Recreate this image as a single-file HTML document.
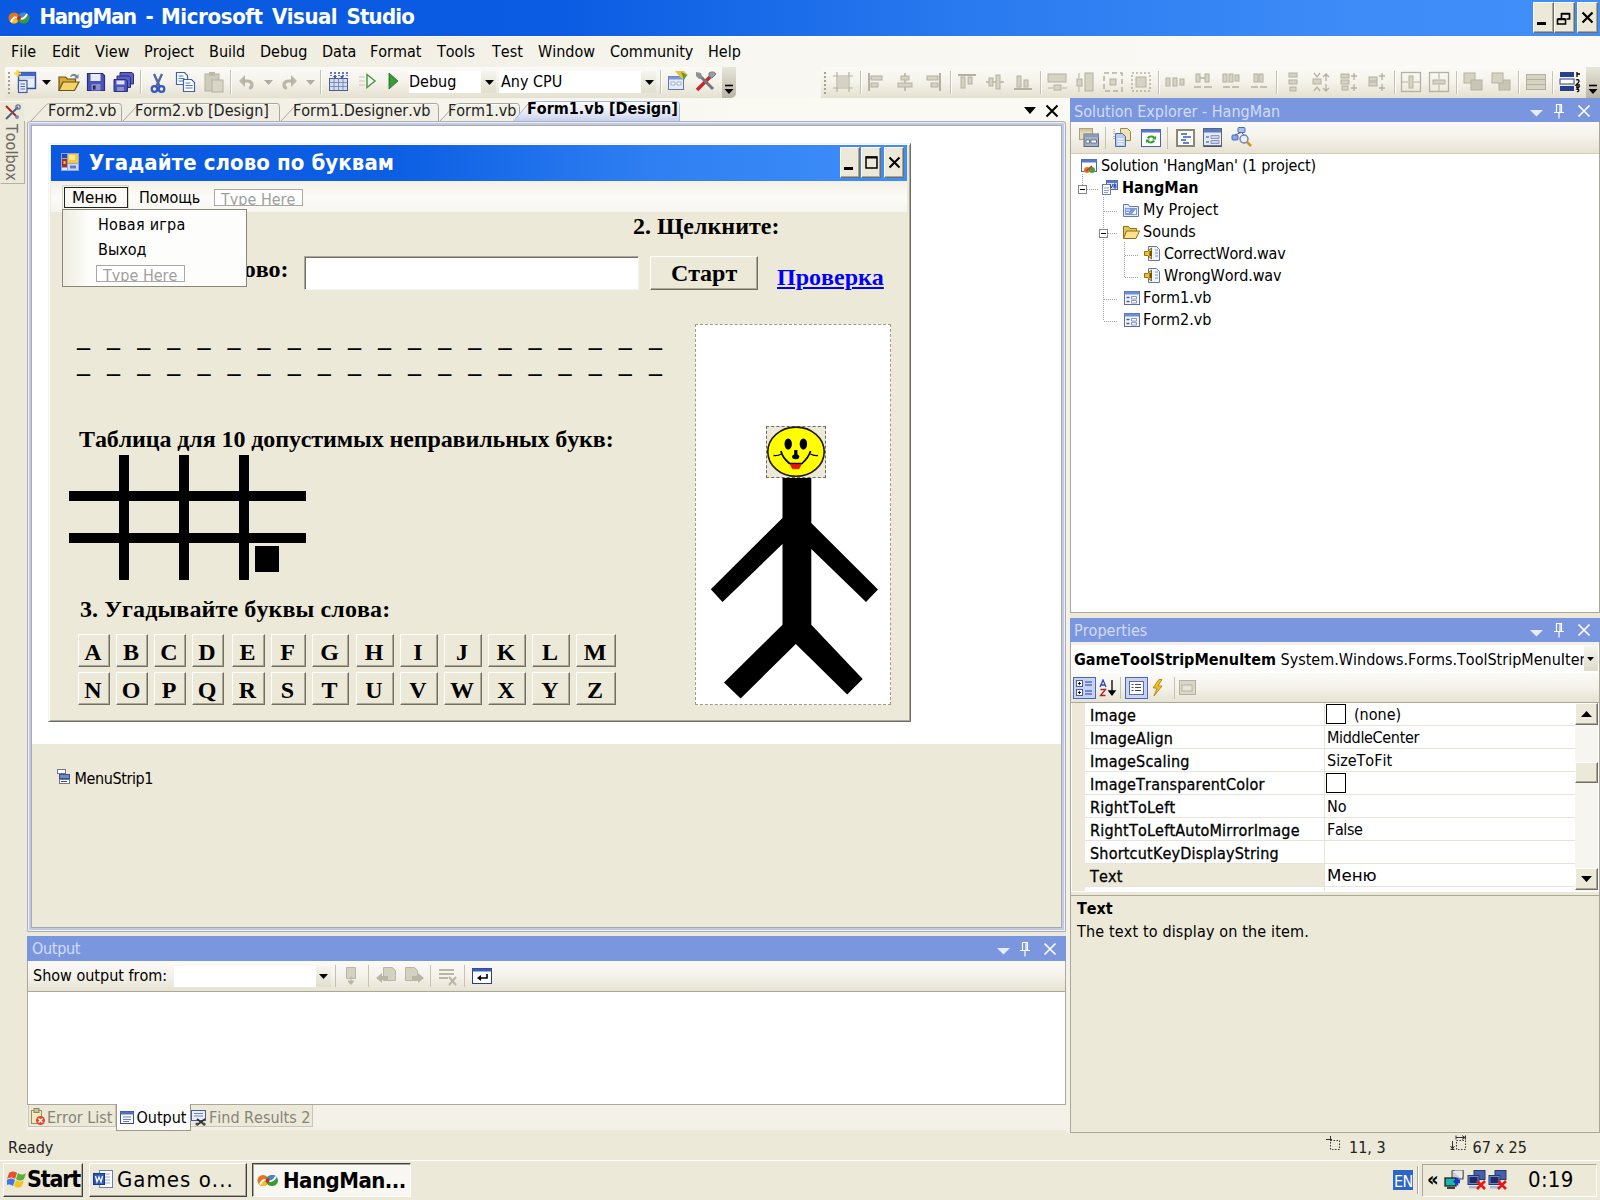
<!DOCTYPE html>
<html><head><meta charset="utf-8"><title>HangMan - Microsoft Visual Studio</title>
<style>
*{box-sizing:border-box;margin:0;padding:0}
html,body{width:1600px;height:1200px;overflow:hidden;background:#ECE9D8}
body{position:relative;font-family:"DejaVu Sans Condensed","Liberation Sans",sans-serif;font-size:16px;color:#000;font-kerning:none;font-feature-settings:'kern' 0,'liga' 0}
.a{position:absolute}
.t{position:absolute;white-space:nowrap;line-height:1}
.ser{font-family:"Liberation Serif",serif;font-weight:bold}
.b{font-weight:bold}
.btn3d{position:absolute;background:#ECE9D8;border:1px solid;border-color:#fff #716F64 #716F64 #fff;box-shadow:inset -1px -1px 0 #ACA899}
.phead{position:absolute;background:#7A96DF;color:#DDE4F6;font-size:16px}
.sep{position:absolute;width:1px;background:#C5C2B2;box-shadow:1px 0 0 #fff}
.tb{position:absolute;border-radius:0 0 6px 0;background:linear-gradient(180deg,#FBFAF7 0%,#F4F2EA 50%,#E4E1D0 100%)}
.lb{position:absolute;background:#ECE9D8;border:1px solid;border-color:#fff #716F64 #716F64 #fff;box-shadow:inset -1px -1px 0 #ACA899;font-family:"Liberation Serif",serif;font-weight:bold;font-size:24px;text-align:center;line-height:34px;padding-right:2px}
</style></head><body>
<div class="a" style="left:0px;top:0px;width:1600px;height:36px;background:linear-gradient(90deg,#0A59E0 0%,#0B5CE2 35%,#2B7BF0 62%,#3D8CF8 85%,#3F8EF9 100%)"></div>
<svg class="a" style="left:8px;top:10px" width="22" height="16" viewBox="0 0 22 16"><ellipse cx="6" cy="8" rx="5.500" ry="5.500" fill="#E8731C"/><ellipse cx="15.500" cy="8" rx="6" ry="5.500" fill="#3A9B35"/><ellipse cx="16" cy="5" rx="4" ry="2.500" fill="#4E7FD8"/><ellipse cx="6" cy="11" rx="3.500" ry="2.500" fill="#F4C22B"/><path d="M3 12C8 0,13 16,19 4" stroke="#fff" stroke-width="1.800" fill="none"/><circle cx="11" cy="8" r="2" fill="#C7252B"/></svg>
<span class="t ttl" style="left:39.5px;top:6.4px;font-size:22px;font-weight:bold;color:#fff;letter-spacing:-1.3px">HangMan</span>
<span class="t ttl" style="left:145.5px;top:6.4px;font-size:22px;font-weight:bold;color:#fff;letter-spacing:-0.2px">-</span>
<span class="t ttl" style="left:161px;top:6.4px;font-size:22px;font-weight:bold;color:#fff;letter-spacing:-0.37px">Microsoft</span>
<span class="t ttl" style="left:272px;top:6.4px;font-size:22px;font-weight:bold;color:#fff;letter-spacing:-0.5px">Visual</span>
<span class="t ttl" style="left:346.5px;top:6.4px;font-size:22px;font-weight:bold;color:#fff;letter-spacing:-0.8px">Studio</span>
<div class="btn3d" style="left:1533px;top:2px;width:21px;height:31px"></div>
<div class="btn3d" style="left:1554px;top:2px;width:21px;height:31px"></div>
<div class="btn3d" style="left:1577px;top:2px;width:21px;height:31px"></div>
<div class="a" style="left:1537px;top:22px;width:9px;height:3px;background:#000"></div>
<svg class="a" style="left:1556px;top:12px" width="15" height="13" viewBox="0 0 15 13"><path d="M5.500 6V1.800h8v5.200h-3 M5.500 1.500h8" stroke="#000" stroke-width="1.700" fill="none"/><path d="M1.5 7.5h8v4.5h-8z M1.5 6.8h8" stroke="#000" stroke-width="1.6" fill="none"/></svg>
<svg class="a" style="left:1581px;top:11px" width="13" height="13" viewBox="0 0 13 13"><path d="M1.5 1.5L11.5 11.5M11.5 1.5L1.5 11.5" stroke="#000" stroke-width="2.2"/></svg>
<div class="a" style="left:0px;top:36px;width:1600px;height:64px;background:linear-gradient(90deg,#ECE9D8 0,#F1EFE3 22%,#F8F7F1 48%,#FBFAF7 100%)"></div>
<div class="a" style="left:0px;top:36px;width:1600px;height:1px;background:#fff"></div>
<span class="t m" style="left:11px;top:44.0px;font-size:16px;">File</span>
<span class="t m" style="left:52px;top:44.0px;font-size:16px;">Edit</span>
<span class="t m" style="left:95px;top:44.0px;font-size:16px;">View</span>
<span class="t m" style="left:144px;top:44.0px;font-size:16px;">Project</span>
<span class="t m" style="left:209px;top:44.0px;font-size:16px;">Build</span>
<span class="t m" style="left:260px;top:44.0px;font-size:16px;">Debug</span>
<span class="t m" style="left:322px;top:44.0px;font-size:16px;">Data</span>
<span class="t m" style="left:370px;top:44.0px;font-size:16px;">Format</span>
<span class="t m" style="left:437px;top:44.0px;font-size:16px;">Tools</span>
<span class="t m" style="left:492px;top:44.0px;font-size:16px;">Test</span>
<span class="t m" style="left:538px;top:44.0px;font-size:16px;">Window</span>
<span class="t m" style="left:610px;top:44.0px;font-size:16px;">Community</span>
<span class="t m" style="left:708px;top:44.0px;font-size:16px;">Help</span>
<div class="tb" style="left:5px;top:67px;width:731px;height:31px"></div>
<div class="a" style="left:722px;top:67px;width:14px;height:31px;border-radius:0 0 5px 0;background:linear-gradient(180deg,#E8E6DA,#B8B5A5)"></div>
<svg class="a" style="left:724px;top:84px" width="10" height="11" viewBox="0 0 10 11"><path d="M1 1.5h8" stroke="#000" stroke-width="1.6"/><path d="M0.5 5h9L5 10z" fill="#000"/></svg>
<svg class="a" style="left:8px;top:71px" width="4" height="24" viewBox="0 0 4 24"><rect x="0" y="1" width="2" height="2" fill="#A5A292"/><rect x="0" y="5" width="2" height="2" fill="#A5A292"/><rect x="0" y="9" width="2" height="2" fill="#A5A292"/><rect x="0" y="13" width="2" height="2" fill="#A5A292"/><rect x="0" y="17" width="2" height="2" fill="#A5A292"/><rect x="0" y="21" width="2" height="2" fill="#A5A292"/></svg>
<svg class="a" style="left:14px;top:70px" width="24" height="24" viewBox="0 0 24 24"><rect x="4.500" y="2.500" width="17" height="16" fill="#CCDAF6" stroke="#3450A0" stroke-width="1.400"/><rect x="4.500" y="2.500" width="17" height="3.500" fill="#4468C4"/><path d="M12 9h8v8h-8z" fill="#E8EEFC"/><path d="M3.500 0v7M0 3.500h7" stroke="#F8D838" stroke-width="2.200"/><rect x="4.500" y="10.500" width="8.500" height="12" fill="#E4ECFA" stroke="#4C5C94" stroke-width="1.200"/><path d="M6.500 14h4.500M6.500 16.500h4.500M6.500 19h4.500" stroke="#4C70C8" stroke-width="1.100"/></svg>
<svg class="a" style="left:42px;top:80px" width="9" height="5" viewBox="0 0 9 5"><path d="M0 0h9L4.5 5z" fill="#000"/></svg>
<svg class="a" style="left:57px;top:71px" width="24" height="22" viewBox="0 0 24 22"><path d="M2 19.500V6h6.500l2 2h8v3" fill="#D8A838" stroke="#6C5410" stroke-width="1.200"/><path d="M2 19.500l4-8.500h16l-4.500 8.500z" fill="#F4D468" stroke="#6C5410" stroke-width="1.200"/><path d="M13 5c3-3.500 6-2.500 7-0.500l1.500-1.500V7.500h-4.500l1.500-1.500c-1-1.200-3-1.500-4.500 0z" fill="#7888A4"/></svg>
<svg class="a" style="left:86px;top:72px" width="20" height="20" viewBox="0 0 20 20"><path d="M1.500 1.500h15l2 2v15h-17z" fill="#4B53B8" stroke="#2B2F7A" stroke-width="1.2"/><rect x="4.500" y="2" width="10" height="7" fill="#E8EAF6"/><rect x="5.500" y="12" width="9" height="6.500" fill="#8A8FD0"/><rect x="7" y="13.500" width="2.500" height="4" fill="#22255E"/></svg>
<svg class="a" style="left:113px;top:71px" width="22" height="22" viewBox="0 0 22 22"><path d="M7 1.500h12l1.500 1.500v10h-13.500z" fill="#5A61C0" stroke="#2B2F7A"/><path d="M4 5h12l1.500 1.500v10h-13.500z" fill="#5A61C0" stroke="#2B2F7A"/><path d="M1 8.500h12l1.500 1.500v10.500h-13.500z" fill="#4B53B8" stroke="#2B2F7A"/><rect x="3.500" y="9.500" width="8" height="4" fill="#E0E3F4"/><rect x="4" y="16" width="7" height="4" fill="#8A8FD0"/></svg>
<div class="sep" style="left:140px;top:70px;height:24px"></div>
<svg class="a" style="left:148px;top:70px" width="20" height="24" viewBox="0 0 20 24"><path d="M6 4l5.500 12M14 4L8.500 16" stroke="#5468A0" stroke-width="2.400"/><circle cx="6.500" cy="19" r="2.800" fill="none" stroke="#3458C0" stroke-width="2.200"/><circle cx="13.500" cy="19" r="2.800" fill="none" stroke="#3458C0" stroke-width="2.200"/></svg>
<svg class="a" style="left:175px;top:71px" width="22" height="22" viewBox="0 0 22 22"><path d="M1.500 1.500h8l3 3v9h-11z" fill="#fff" stroke="#4060B0" stroke-width="1.200"/><path d="M3.500 5h5M3.500 7.500h6M3.500 10h6" stroke="#4F77CF"/><path d="M8.500 8.500h8l3 3v9h-11z" fill="#fff" stroke="#4060B0" stroke-width="1.200"/><path d="M10.500 12h5M10.500 14.500h7M10.500 17h7" stroke="#4F77CF"/></svg>
<svg class="a" style="left:203px;top:71px" width="22" height="22" viewBox="0 0 22 22"><rect x="2" y="3" width="14" height="17" fill="#CFCCBC" stroke="#B4B1A0"/><rect x="6" y="1" width="6" height="4" fill="#BDBAA9"/><rect x="9" y="9" width="11" height="12" fill="#D9D6C7" stroke="#B4B1A0"/></svg>
<div class="sep" style="left:230px;top:70px;height:24px"></div>
<svg class="a" style="left:238px;top:72px" width="18" height="18" viewBox="0 0 18 18"><path d="M3 9h6c4 0 5 2 5 4s-1 3-3 3" stroke="#B9B6A6" stroke-width="3" fill="none"/><path d="M1 9l6-6v12z" fill="#B9B6A6"/></svg>
<svg class="a" style="left:264px;top:80px" width="9" height="5" viewBox="0 0 9 5"><path d="M0 0h9L4.5 5z" fill="#B0AD9D"/></svg>
<svg class="a" style="left:280px;top:72px" width="18" height="18" viewBox="0 0 18 18"><path d="M15 9H9C5 9 4 11 4 13s1 3 3 3" stroke="#B9B6A6" stroke-width="3" fill="none"/><path d="M17 9l-6-6v12z" fill="#B9B6A6"/></svg>
<svg class="a" style="left:306px;top:80px" width="9" height="5" viewBox="0 0 9 5"><path d="M0 0h9L4.5 5z" fill="#B0AD9D"/></svg>
<div class="sep" style="left:320px;top:70px;height:24px"></div>
<svg class="a" style="left:328px;top:71px" width="22" height="22" viewBox="0 0 22 22"><rect x="1.500" y="7.500" width="18" height="12" fill="#D4DCF0" stroke="#4C5A8C"/><path d="M1.500 11.500h18M1.500 15.500h18M6 7.500v12M10.500 7.500v12M15 7.500v12" stroke="#6C7CB0" stroke-width="0.800"/><path d="M3 1v4M7 1v4M11 1v4M15 1v4M19 1v4" stroke="#3458B8" stroke-width="1.600" stroke-dasharray="2 1"/><path d="M5 5l2 3 2-3M12 5l2 3 2-3" fill="#3458B8"/></svg>
<svg class="a" style="left:358px;top:72px" width="20" height="18" viewBox="0 0 20 18"><path d="M1 5h6M1 9h6M1 13h6" stroke="#C9C6B4" stroke-width="1.200"/><path d="M9 2.500l8 6.500-8 6.500z" fill="#F4FAF0" stroke="#4B9A43" stroke-width="1.500"/></svg>
<svg class="a" style="left:388px;top:72px" width="12" height="18" viewBox="0 0 12 18"><path d="M1 1l9 8-9 8z" fill="#3A9A35" stroke="#1F6B1E" stroke-width="0.800"/></svg>
<div class="a" style="left:409px;top:71px;width:72px;height:22px;background:#fff"></div>
<div class="a" style="left:481px;top:71px;width:15px;height:22px;background:linear-gradient(180deg,#F6F5EE,#E2DFCE)"></div>
<span class="t" style="left:409px;top:73.5px;font-size:16px;">Debug</span>
<svg class="a" style="left:485px;top:80px" width="9" height="5" viewBox="0 0 9 5"><path d="M0 0h9L4.5 5z" fill="#000"/></svg>
<div class="a" style="left:499px;top:71px;width:142px;height:22px;background:#fff"></div>
<div class="a" style="left:641px;top:71px;width:15px;height:22px;background:linear-gradient(180deg,#F6F5EE,#E2DFCE)"></div>
<span class="t" style="left:501px;top:73.5px;font-size:16px;">Any CPU</span>
<svg class="a" style="left:645px;top:80px" width="9" height="5" viewBox="0 0 9 5"><path d="M0 0h9L4.5 5z" fill="#000"/></svg>
<div class="sep" style="left:660px;top:70px;height:24px"></div>
<svg class="a" style="left:667px;top:70px" width="22" height="22" viewBox="0 0 22 22"><rect x="1.500" y="6.500" width="15" height="13" fill="#E6ECF8" stroke="#5C74B8"/><rect x="1.500" y="6.500" width="15" height="3" fill="#7C98DC"/><path d="M4 12h4v3h-4zM10 12h4v3h-4z" fill="#fff" stroke="#8CA0D0" stroke-width="0.800"/><path d="M8 1h9l4 4-5 4-3-2z" fill="#E8C040"/><path d="M14 2l6 3-3 5" fill="#5C9A48"/></svg>
<svg class="a" style="left:694px;top:70px" width="24" height="24" viewBox="0 0 24 24"><path d="M3 20L16 7" stroke="#C8262C" stroke-width="3.500"/><path d="M5 5l14 14" stroke="#70747C" stroke-width="3"/><path d="M2 2l5 1 1 5-3 1-3-3z" fill="#8C9098"/><path d="M15 3c3-2 6-1 7 1l-4 4-3-1z" fill="#9A9EA8" stroke="#60646C" stroke-width="0.800"/></svg>
<div class="tb" style="left:821px;top:67px;width:779px;height:31px;border-radius:0"></div>
<div class="a" style="left:1586px;top:67px;width:14px;height:31px;background:linear-gradient(180deg,#E8E6DA,#B8B5A5)"></div>
<svg class="a" style="left:1588px;top:84px" width="10" height="11" viewBox="0 0 10 11"><path d="M1 1.500h8" stroke="#000" stroke-width="1.600"/><path d="M0.500 5h9L5 10z" fill="#000"/></svg>
<svg class="a" style="left:824px;top:71px" width="4" height="24" viewBox="0 0 4 24"><rect x="0" y="1" width="2" height="2" fill="#A5A292"/><rect x="0" y="5" width="2" height="2" fill="#A5A292"/><rect x="0" y="9" width="2" height="2" fill="#A5A292"/><rect x="0" y="13" width="2" height="2" fill="#A5A292"/><rect x="0" y="17" width="2" height="2" fill="#A5A292"/><rect x="0" y="21" width="2" height="2" fill="#A5A292"/></svg>
<svg class="a" style="left:832px;top:71px" width="22" height="22" viewBox="0 0 22 22"><path d="M5 1v20M17 1v20M1 5h20M1 17h20" stroke="#B4B1A0" stroke-width="1.200"/><rect x="6" y="6" width="10" height="10" fill="#D6D3C3"/></svg>
<svg class="a" style="left:865px;top:71px" width="22" height="22" viewBox="0 0 22 22"><path d="M4 2v18" stroke="#B4B1A0" stroke-width="2"/><rect x="6" y="5" width="11" height="4" fill="#D6D3C3" stroke="#B4B1A0"/><rect x="6" y="12" width="7" height="4" fill="#D6D3C3" stroke="#B4B1A0"/></svg>
<svg class="a" style="left:894px;top:71px" width="22" height="22" viewBox="0 0 22 22"><path d="M11 2v18" stroke="#B4B1A0" stroke-width="1.500"/><rect x="7" y="5" width="8" height="4" fill="#D6D3C3" stroke="#B4B1A0"/><rect x="4" y="12" width="14" height="4" fill="#D6D3C3" stroke="#B4B1A0"/></svg>
<svg class="a" style="left:922px;top:71px" width="22" height="22" viewBox="0 0 22 22"><path d="M18 2v18" stroke="#B4B1A0" stroke-width="2"/><rect x="5" y="5" width="11" height="4" fill="#D6D3C3" stroke="#B4B1A0"/><rect x="9" y="12" width="7" height="4" fill="#D6D3C3" stroke="#B4B1A0"/></svg>
<svg class="a" style="left:956px;top:71px" width="22" height="22" viewBox="0 0 22 22"><path d="M2 4h18" stroke="#B4B1A0" stroke-width="2"/><rect x="5" y="6" width="4" height="11" fill="#D6D3C3" stroke="#B4B1A0"/><rect x="12" y="6" width="4" height="7" fill="#D6D3C3" stroke="#B4B1A0"/></svg>
<svg class="a" style="left:984px;top:71px" width="22" height="22" viewBox="0 0 22 22"><path d="M2 11h18" stroke="#B4B1A0" stroke-width="1.500"/><rect x="5" y="7" width="4" height="8" fill="#D6D3C3" stroke="#B4B1A0"/><rect x="12" y="4" width="4" height="14" fill="#D6D3C3" stroke="#B4B1A0"/></svg>
<svg class="a" style="left:1012px;top:71px" width="22" height="22" viewBox="0 0 22 22"><path d="M2 18h18" stroke="#B4B1A0" stroke-width="2"/><rect x="5" y="5" width="4" height="11" fill="#D6D3C3" stroke="#B4B1A0"/><rect x="12" y="9" width="4" height="7" fill="#D6D3C3" stroke="#B4B1A0"/></svg>
<svg class="a" style="left:1046px;top:71px" width="22" height="22" viewBox="0 0 22 22"><rect x="2" y="3" width="18" height="8" fill="#D6D3C3" stroke="#B4B1A0"/><rect x="8" y="14" width="7" height="5" fill="#D6D3C3" stroke="#B4B1A0"/><path d="M2 17h5M16 17h5" stroke="#B4B1A0"/></svg>
<svg class="a" style="left:1074px;top:71px" width="22" height="22" viewBox="0 0 22 22"><rect x="11" y="2" width="8" height="18" fill="#D6D3C3" stroke="#B4B1A0"/><rect x="3" y="8" width="5" height="7" fill="#D6D3C3" stroke="#B4B1A0"/><path d="M5 2v5M5 16v5" stroke="#B4B1A0"/></svg>
<svg class="a" style="left:1102px;top:71px" width="22" height="22" viewBox="0 0 22 22"><rect x="2" y="2" width="18" height="18" fill="none" stroke="#B4B1A0" stroke-width="1.500" stroke-dasharray="5 3"/><rect x="8" y="8" width="6" height="6" fill="#D6D3C3" stroke="#B4B1A0"/></svg>
<svg class="a" style="left:1130px;top:71px" width="22" height="22" viewBox="0 0 22 22"><rect x="2" y="2" width="18" height="18" fill="none" stroke="#B4B1A0" stroke-width="1.500" stroke-dasharray="2 2"/><rect x="6" y="6" width="10" height="10" fill="#D6D3C3" stroke="#B4B1A0"/></svg>
<svg class="a" style="left:1164px;top:71px" width="22" height="22" viewBox="0 0 22 22"><rect x="2" y="7" width="4" height="8" fill="#D6D3C3" stroke="#B4B1A0"/><rect x="9" y="7" width="4" height="8" fill="#D6D3C3" stroke="#B4B1A0"/><rect x="16" y="8" width="4" height="6" fill="#D6D3C3" stroke="#B4B1A0"/></svg>
<svg class="a" style="left:1192px;top:71px" width="22" height="22" viewBox="0 0 22 22"><rect x="4" y="3" width="4" height="8" fill="#D6D3C3" stroke="#B4B1A0"/><rect x="13" y="3" width="4" height="8" fill="#D6D3C3" stroke="#B4B1A0"/><path d="M2 16h7M12 16h8M8 7h5" stroke="#B4B1A0" stroke-width="1.300"/></svg>
<svg class="a" style="left:1220px;top:71px" width="22" height="22" viewBox="0 0 22 22"><rect x="3" y="3" width="4" height="8" fill="#D6D3C3" stroke="#B4B1A0"/><rect x="9" y="3" width="4" height="8" fill="#D6D3C3" stroke="#B4B1A0"/><rect x="15" y="4" width="4" height="6" fill="#D6D3C3" stroke="#B4B1A0"/><path d="M3 16h7M12 16h7" stroke="#B4B1A0" stroke-width="1.300"/></svg>
<svg class="a" style="left:1248px;top:71px" width="22" height="22" viewBox="0 0 22 22"><rect x="6" y="3" width="4" height="8" fill="#D6D3C3" stroke="#B4B1A0"/><rect x="11" y="3" width="4" height="8" fill="#D6D3C3" stroke="#B4B1A0"/><path d="M3 16h7M12 16h7" stroke="#B4B1A0" stroke-width="1.300"/></svg>
<svg class="a" style="left:1282px;top:71px" width="22" height="22" viewBox="0 0 22 22"><rect x="7" y="2" width="8" height="4" fill="#D6D3C3" stroke="#B4B1A0"/><rect x="7" y="9" width="8" height="4" fill="#D6D3C3" stroke="#B4B1A0"/><rect x="8" y="16" width="6" height="4" fill="#D6D3C3" stroke="#B4B1A0"/></svg>
<svg class="a" style="left:1310px;top:71px" width="22" height="22" viewBox="0 0 22 22"><rect x="3" y="8" width="8" height="5" fill="#D6D3C3" stroke="#B4B1A0"/><path d="M4 2l3 4 3-4M4 20l3-4 3 4M16 3v7M16 13v7M13 6l3-3 3 3M13 17l3 3 3-3" stroke="#B4B1A0" stroke-width="1.300" fill="none"/></svg>
<svg class="a" style="left:1338px;top:71px" width="22" height="22" viewBox="0 0 22 22"><rect x="3" y="3" width="8" height="4" fill="#D6D3C3" stroke="#B4B1A0"/><rect x="3" y="9" width="8" height="4" fill="#D6D3C3" stroke="#B4B1A0"/><rect x="4" y="15" width="6" height="4" fill="#D6D3C3" stroke="#B4B1A0"/><path d="M16 2v7M16 13v7M13 5h6M13 17h6" stroke="#B4B1A0" stroke-width="1.300"/></svg>
<svg class="a" style="left:1366px;top:71px" width="22" height="22" viewBox="0 0 22 22"><rect x="3" y="6" width="8" height="4" fill="#D6D3C3" stroke="#B4B1A0"/><rect x="3" y="11" width="8" height="4" fill="#D6D3C3" stroke="#B4B1A0"/><path d="M16 2v7M16 13v7M13 5h6M13 17h6" stroke="#B4B1A0" stroke-width="1.300"/></svg>
<svg class="a" style="left:1400px;top:71px" width="22" height="22" viewBox="0 0 22 22"><rect x="1.500" y="1.500" width="19" height="19" fill="none" stroke="#B4B1A0" stroke-width="1.300"/><rect x="9" y="5" width="4" height="12" fill="#D6D3C3" stroke="#B4B1A0"/><path d="M2 11h6M14 11h6" stroke="#B4B1A0"/></svg>
<svg class="a" style="left:1428px;top:71px" width="22" height="22" viewBox="0 0 22 22"><rect x="1.500" y="1.500" width="19" height="19" fill="none" stroke="#B4B1A0" stroke-width="1.300"/><rect x="5" y="9" width="12" height="4" fill="#D6D3C3" stroke="#B4B1A0"/><path d="M11 2v6M11 14v6" stroke="#B4B1A0"/></svg>
<svg class="a" style="left:1462px;top:71px" width="22" height="22" viewBox="0 0 22 22"><rect x="2" y="2" width="11" height="10" fill="#D6D3C3" stroke="#B4B1A0"/><rect x="9" y="9" width="11" height="10" fill="#C9C6B5" stroke="#B4B1A0"/></svg>
<svg class="a" style="left:1490px;top:71px" width="22" height="22" viewBox="0 0 22 22"><rect x="9" y="9" width="11" height="10" fill="#C9C6B5" stroke="#B4B1A0"/><rect x="2" y="2" width="11" height="10" fill="#D6D3C3" stroke="#B4B1A0"/></svg>
<svg class="a" style="left:1525px;top:71px" width="22" height="22" viewBox="0 0 22 22"><rect x="1.500" y="3.500" width="19" height="15" fill="#D6D3C3" stroke="#B4B1A0"/><path d="M2 8.500h19M2 13.500h19" stroke="#B4B1A0"/></svg>
<svg class="a" style="left:1559px;top:70px" width="24" height="24" viewBox="0 0 24 24"><rect x="1" y="2" width="14" height="5" fill="#28408C"/><rect x="1" y="9" width="14" height="5" fill="#fff" stroke="#28408C"/><rect x="1" y="16" width="14" height="5" fill="#28408C"/><path d="M18 2v5M18 4h3M17 10c3-1 4 1 2 3l-2 2h4M17 17h3l-2 2c2 0 3 2 0 3" stroke="#000" stroke-width="1.300" fill="none"/></svg>
<div class="sep" style="left:860px;top:71px;height:23px"></div>
<div class="sep" style="left:950px;top:71px;height:23px"></div>
<div class="sep" style="left:1040px;top:71px;height:23px"></div>
<div class="sep" style="left:1158px;top:71px;height:23px"></div>
<div class="sep" style="left:1276px;top:71px;height:23px"></div>
<div class="sep" style="left:1394px;top:71px;height:23px"></div>
<div class="sep" style="left:1456px;top:71px;height:23px"></div>
<div class="sep" style="left:1518px;top:71px;height:23px"></div>
<div class="sep" style="left:1552px;top:71px;height:23px"></div>
<div class="a" style="left:0px;top:101px;width:25px;height:83px;background:#ECE9D8;border:1px solid;border-color:#F8F7F2 #B5B2A2 #B5B2A2 #ECE9D8"></div>
<svg class="a" style="left:4px;top:104px" width="17" height="17" viewBox="0 0 17 17"><path d="M2 2l12 12" stroke="#B02020" stroke-width="2"/><path d="M2 15L14 3" stroke="#50607C" stroke-width="2"/><circle cx="14" cy="3" r="2.200" fill="none" stroke="#6078A8" stroke-width="1.300"/><circle cx="13" cy="13" r="2" fill="#7C90B8"/></svg>
<span class="t" style="left:3px;top:124px;font-size:16px;color:#6A6A64;writing-mode:vertical-rl;">Toolbox</span>
<div class="a" style="left:24px;top:99px;width:1046px;height:22px;background:linear-gradient(90deg,#EFEDE0 0,#F4F2E8 30%,#FAF9F2 70%,#FAF9F2 100%)"></div>
<svg class="a" style="left:30px;top:102px" width="93" height="20" viewBox="0 0 93 20"><path d="M0.500 19.500L15 4Q17 1.500 21 1.500H89Q91.5 1.500 91.5 4.500V19.500" fill="#EEECDF" fill-opacity="0.6" stroke="#ACA899"/><path d="M16 4.500Q18 2.500 21 2.500H89" fill="none" stroke="#fff"/></svg>
<span class="t" style="left:48px;top:102.5px;font-size:16px;color:#222">Form2.vb</span>
<svg class="a" style="left:122px;top:102px" width="159" height="20" viewBox="0 0 159 20"><path d="M0.500 19.500L15 4Q17 1.500 21 1.500H155Q157.5 1.500 157.5 4.500V19.500" fill="#EEECDF" fill-opacity="0.6" stroke="#ACA899"/><path d="M16 4.500Q18 2.500 21 2.500H155" fill="none" stroke="#fff"/></svg>
<span class="t" style="left:135px;top:102.5px;font-size:16px;color:#222">Form2.vb [Design]</span>
<svg class="a" style="left:280px;top:102px" width="160" height="20" viewBox="0 0 160 20"><path d="M0.500 19.500L15 4Q17 1.500 21 1.500H156Q158.5 1.500 158.5 4.500V19.500" fill="#EEECDF" fill-opacity="0.6" stroke="#ACA899"/><path d="M16 4.500Q18 2.500 21 2.500H156" fill="none" stroke="#fff"/></svg>
<span class="t" style="left:293px;top:102.5px;font-size:16px;color:#222">Form1.Designer.vb</span>
<svg class="a" style="left:439px;top:102px" width="82" height="20" viewBox="0 0 82 20"><path d="M0.500 19.500L15 4Q17 1.500 21 1.500H78Q80.5 1.500 80.5 4.500V19.500" fill="#EEECDF" fill-opacity="0.6" stroke="#ACA899"/><path d="M16 4.500Q18 2.500 21 2.500H78" fill="none" stroke="#fff"/></svg>
<span class="t" style="left:448px;top:102.5px;font-size:16px;color:#222">Form1.vb</span>
<svg class="a" style="left:510px;top:100px" width="172" height="26" viewBox="0 0 172 26"><defs><linearGradient id="atg" x1="0" y1="0" x2="0" y2="1"><stop offset="0" stop-color="#FDFDFE"/><stop offset="0.500" stop-color="#E4E9F7"/><stop offset="1" stop-color="#B7C4EA"/></linearGradient></defs><path d="M0.500 25L17 5Q19.500 1.500 24 1.500H166Q169.500 1.500 169.500 5V25z" fill="url(#atg)" stroke="#A8B4D8"/></svg>
<span class="t atab" style="left:527px;top:100.5px;font-size:16px;font-weight:bold;">Form1.vb [Design]</span>
<svg class="a" style="left:1024px;top:107px" width="12" height="7" viewBox="0 0 12 7"><path d="M0 0h12L6 7z" fill="#000"/></svg>
<svg class="a" style="left:1045px;top:104px" width="14" height="14" viewBox="0 0 14 14"><path d="M1.500 1.500L12.500 12.500M12.500 1.500L1.500 12.500" stroke="#000" stroke-width="2"/></svg>
<div class="a" style="left:27px;top:121px;width:1039px;height:811px;background:#fff;border-radius:3px 3px 0 0;border:1px solid #A9ADBC;box-shadow:inset 0 0 0 1px #EEF0F8, inset 0 0 0 3px #C3C9DE, inset 0 0 0 4px #A4A9B6"></div>
<div class="a" style="left:32px;top:744px;width:1029px;height:183px;background:#ECE9D8"></div>
<svg class="a" style="left:57px;top:769px" width="13" height="15" viewBox="0 0 13 15"><rect x="0.500" y="0.500" width="8" height="4" fill="#fff" stroke="#6C7890"/><rect x="2.500" y="5.500" width="10" height="4" fill="#7088D0" stroke="#40508C"/><rect x="2.500" y="10.500" width="10" height="4" fill="#fff" stroke="#6C7890"/><path d="M4 12.500h6" stroke="#40508C"/></svg>
<span class="t ms1" style="left:74.5px;top:770.5px;font-size:16px;letter-spacing:-0.4px">MenuStrip1</span>
<div class="a" style="left:48px;top:143px;width:863px;height:579px;background:#ECE9D8;border:1px solid;border-color:#F4F3EC #6E6C62 #6E6C62 #F4F3EC;box-shadow:inset 1px 1px 0 #fff, inset -1px -1px 0 #ACA899"></div>
<div class="a" style="left:51px;top:145px;width:856px;height:36px;background:linear-gradient(90deg,#0A59E0 0%,#0C5EE3 40%,#2F7FF2 70%,#3F8EF9 100%)"></div>
<svg class="a" style="left:61px;top:153px" width="18" height="18" viewBox="0 0 18 18"><rect x="0" y="0" width="18" height="18" fill="#8CA4E4"/><rect x="1" y="1" width="5" height="4" fill="#2848B0"/><rect x="7" y="1" width="10" height="9" fill="#F8C838"/><rect x="8" y="2" width="6" height="5" fill="#FCE888"/><rect x="1" y="6" width="5" height="8" fill="#B82818"/><rect x="2.500" y="8" width="2" height="3" fill="#F0D040"/><rect x="7" y="11" width="10" height="6" fill="#D0DCF4"/><rect x="9" y="12.500" width="6" height="3" fill="#5878D0"/><rect x="1" y="15" width="5" height="2" fill="#E8ECF8"/></svg>
<span class="t ftl" style="left:89px;top:152.4px;font-size:22px;font-weight:bold;color:#fff;letter-spacing:0.08px">Угадайте слово по буквам</span>
<div class="btn3d" style="left:840px;top:147px;width:20px;height:31px"></div>
<div class="btn3d" style="left:861px;top:147px;width:20px;height:31px"></div>
<div class="btn3d" style="left:884px;top:147px;width:20px;height:31px"></div>
<div class="a" style="left:844px;top:167px;width:9px;height:3px;background:#000"></div>
<svg class="a" style="left:865px;top:156px" width="13" height="13" viewBox="0 0 13 13"><rect x="1" y="1" width="11" height="11" fill="none" stroke="#000" stroke-width="1.500"/><path d="M1 1.500h11" stroke="#000" stroke-width="2"/></svg>
<svg class="a" style="left:888px;top:156px" width="13" height="13" viewBox="0 0 13 13"><path d="M1.500 1.500L11.500 11.500M11.500 1.500L1.500 11.500" stroke="#000" stroke-width="2"/></svg>
<div class="a" style="left:51px;top:181px;width:856px;height:31px;background:linear-gradient(180deg,#F3F1E6 0%,#FCFBF8 50%,#F6F5EE 100%)"></div>
<span class="t ser l2" style="left:633px;top:214.4px;font-size:24px;">2. Щелкните:</span>
<span class="t ser l1" style="left:101.5px;top:256.9px;font-size:24px;">1. Введите слово:</span>
<div class="a" style="left:304px;top:256px;width:335px;height:34px;background:#fff;border:1px solid;border-color:#ACA899 #F4F3EC #F4F3EC #ACA899;box-shadow:inset 1px 1px 0 #716F64"></div>
<div class="btn3d" style="left:650px;top:256px;width:108px;height:34px"></div>
<span class="t ser st" style="left:671px;top:260.9px;font-size:24px;">Старт</span>
<span class="t ser pr" style="left:777px;top:264.9px;font-size:24px;color:#0000FF;text-decoration:underline">Проверка</span>
<div class="a" style="left:62px;top:185px;width:67px;height:25px;border:1px solid #D8D5C6"></div>
<div class="a" style="left:64px;top:187px;width:64px;height:21px;background:#FAF9F5;border:1px solid #222"></div>
<span class="t mn" style="left:72px;top:190.0px;font-size:16px;transform:scaleX(1.05);transform-origin:0 0">Меню</span>
<span class="t pm" style="left:139px;top:190.0px;font-size:16px;">Помощь</span>
<div class="a" style="left:214px;top:189px;width:89px;height:17px;background:#fff;border:1px solid #A8A8A8;overflow:hidden"><span class="t" style="left:6px;top:2px;font-size:16px;color:#A0A0A0">Type Here</span></div>
<div class="a" style="left:62px;top:209px;width:185px;height:78px;background:#FDFDFB;border:1px solid #8A867A"></div>
<div class="a" style="left:63px;top:210px;width:24px;height:76px;background:linear-gradient(90deg,#F0EEE2,#F7F6EF 70%,#FDFDFB)"></div>
<span class="t ng" style="left:98px;top:216.5px;font-size:16px;letter-spacing:0.25px">Новая игра</span>
<span class="t vy" style="left:98px;top:242.0px;font-size:16px;">Выход</span>
<div class="a" style="left:96px;top:265px;width:89px;height:17px;background:#fff;border:1px solid #A8A8A8;overflow:hidden"><span class="t" style="left:6px;top:2px;font-size:16px;color:#A0A0A0">Type Here</span></div>
<span class="t ser d1" style="left:77px;top:325.2px;font-size:26px;word-spacing:10.6px">_ _ _ _ _ _ _ _ _ _ _ _ _ _ _ _ _ _ _ _</span>
<span class="t ser d2" style="left:77px;top:351.2px;font-size:26px;word-spacing:10.6px">_ _ _ _ _ _ _ _ _ _ _ _ _ _ _ _ _ _ _ _</span>
<span class="t ser tb1" style="left:79px;top:427.4px;font-size:24px;letter-spacing:-0.1px">Таблица для 10 допустимых неправильных букв:</span>
<div class="a" style="left:119px;top:455px;width:10px;height:125px;background:#000"></div>
<div class="a" style="left:179px;top:455px;width:10px;height:125px;background:#000"></div>
<div class="a" style="left:239px;top:455px;width:10px;height:125px;background:#000"></div>
<div class="a" style="left:69px;top:491px;width:237px;height:10px;background:#000"></div>
<div class="a" style="left:69px;top:533px;width:237px;height:10px;background:#000"></div>
<div class="a" style="left:255px;top:546px;width:24px;height:26px;background:#000"></div>
<span class="t ser l3" style="left:80px;top:596.9px;font-size:24px;letter-spacing:0.12px">3. Угадывайте буквы слова:</span>
<div class="lb" style="left:78px;top:634px;width:32px;height:33px">A</div>
<div class="lb" style="left:116px;top:634px;width:32px;height:33px">B</div>
<div class="lb" style="left:154px;top:634px;width:32px;height:33px">C</div>
<div class="lb" style="left:192px;top:634px;width:32px;height:33px">D</div>
<div class="lb" style="left:232px;top:634px;width:33px;height:33px">E</div>
<div class="lb" style="left:271px;top:634px;width:35px;height:33px">F</div>
<div class="lb" style="left:312px;top:634px;width:37px;height:33px">G</div>
<div class="lb" style="left:356px;top:634px;width:38px;height:33px">H</div>
<div class="lb" style="left:400px;top:634px;width:38px;height:33px">I</div>
<div class="lb" style="left:444px;top:634px;width:38px;height:33px">J</div>
<div class="lb" style="left:488px;top:634px;width:38px;height:33px">K</div>
<div class="lb" style="left:532px;top:634px;width:38px;height:33px">L</div>
<div class="lb" style="left:576px;top:634px;width:40px;height:33px">M</div>
<div class="lb" style="left:78px;top:672px;width:32px;height:33px">N</div>
<div class="lb" style="left:116px;top:672px;width:32px;height:33px">O</div>
<div class="lb" style="left:154px;top:672px;width:32px;height:33px">P</div>
<div class="lb" style="left:192px;top:672px;width:32px;height:33px">Q</div>
<div class="lb" style="left:232px;top:672px;width:33px;height:33px">R</div>
<div class="lb" style="left:271px;top:672px;width:35px;height:33px">S</div>
<div class="lb" style="left:312px;top:672px;width:37px;height:33px">T</div>
<div class="lb" style="left:356px;top:672px;width:38px;height:33px">U</div>
<div class="lb" style="left:400px;top:672px;width:38px;height:33px">V</div>
<div class="lb" style="left:444px;top:672px;width:38px;height:33px">W</div>
<div class="lb" style="left:488px;top:672px;width:38px;height:33px">X</div>
<div class="lb" style="left:532px;top:672px;width:38px;height:33px">Y</div>
<div class="lb" style="left:576px;top:672px;width:40px;height:33px">Z</div>
<div class="a" style="left:695px;top:324px;width:196px;height:381px;background:#fff;border:1px dashed #9C9A8C"></div>
<svg class="a" style="left:0;top:0" width="1600" height="1200" viewBox="0 0 1600 1200" pointer-events="none"><polygon points="782.5,478 811.3,478 811.3,523 878,589.5 866,602 811.3,549 811.3,624.700 862.700,679 847.200,694.500 795.800,644 740.600,698.500 724,682.500 782.500,624.700 782.500,544 722.500,602 710.800,589.200 782.500,518" fill="#000"/></svg>
<div class="a" style="left:766px;top:426px;width:60px;height:52px;background:#ECE9D8;border:1px dashed #6C6A60"></div>
<svg class="a" style="left:767px;top:426px" width="58" height="52" viewBox="0 0 58 52"><ellipse cx="29" cy="25.700" rx="28.200" ry="24.600" fill="#FFFF00" stroke="#201800" stroke-width="1.600"/><ellipse cx="21.200" cy="18" rx="3.700" ry="5.600" fill="#000"/><ellipse cx="36.400" cy="18" rx="3.700" ry="5.600" fill="#000"/><rect x="27.200" y="24" width="3.200" height="8" fill="#000"/><ellipse cx="28.700" cy="30.800" rx="3.600" ry="2.500" fill="#000"/><path d="M6.500 29.500Q11 30 14.500 28M51 29.500Q46.500 30 43.500 28" stroke="#000" stroke-width="1.300" fill="none"/><path d="M14 25Q15 31 22.500 37.500H35Q42 31 43.500 25" stroke="#000" stroke-width="1.700" fill="none"/><path d="M23 38H34.500L32 42.800H25.500z" fill="#F01010" stroke="#A01010" stroke-width="0.600"/></svg>
<div class="a" style="left:1066px;top:121px;width:4px;height:1012px;background:#F4F2E8"></div>
<div class="a" style="left:1070px;top:98px;width:530px;height:515px;background:#fff;border:1px solid #ACA899"></div>
<div class="phead" style="left:1070px;top:98px;width:530px;height:24px"></div>
<span class="t seh" style="left:1074px;top:103.5px;font-size:16px;color:#D3DCF6;">Solution Explorer - HangMan</span>
<svg class="a" style="left:1530px;top:110px" width="13" height="7" viewBox="0 0 13 7"><path d="M0 0h13L6.500 6.500z" fill="#E4EEFF"/></svg>
<svg class="a" style="left:1553px;top:103px" width="12" height="16" viewBox="0 0 12 16"><path d="M3.500 1.500h5v8h-5zM7 1.500v8M1 9.500h10M6 9.500v6" stroke="#fff" stroke-width="1.200" fill="none"/></svg>
<svg class="a" style="left:1577px;top:104px" width="14" height="14" viewBox="0 0 14 14"><path d="M1.500 1.500L12.500 12.500M12.500 1.500L1.500 12.500" stroke="#fff" stroke-width="1.700"/></svg>
<div class="a" style="left:1071px;top:122px;width:528px;height:32px;background:linear-gradient(180deg,#FBFAF7 0%,#F4F2EA 50%,#E6E3D3 100%);border-bottom:1px solid #D0CDBD"></div>
<svg class="a" style="left:1079px;top:128px" width="20" height="19" viewBox="0 0 20 19"><rect x="0.500" y="0.500" width="13" height="11" fill="#E4DCC0" stroke="#A8A088"/><rect x="1" y="1" width="12" height="2.500" fill="#D8C890"/><rect x="5" y="6" width="14.500" height="12.500" fill="#A4B0C8" stroke="#5C6880"/><rect x="5" y="6" width="14.500" height="3" fill="#8C98B4"/><path d="M7 12h3.500v3h-3.500zM12 12h5.500v3h-5.500z" fill="#fff" stroke="#48546C" stroke-width="0.700"/></svg>
<div class="a" style="left:1105px;top:127px;width:1px;height:22px;background:#C5C2B2"></div>
<svg class="a" style="left:1113px;top:128px" width="19" height="19" viewBox="0 0 19 19"><path d="M7.500 0.500h7l3 3v9h-10z" fill="#F0E4B4" stroke="#988850"/><path d="M2.500 5.500h7l3 3v10h-10z" fill="#B8CCF0" stroke="#5068A0"/><path d="M4.500 11h6M4.500 13.500h6M4.500 16h6" stroke="#fff" stroke-width="1.200"/><path d="M1 1v5M1 8v4" stroke="#888" stroke-dasharray="1 1"/></svg>
<svg class="a" style="left:1141px;top:129px" width="20" height="18" viewBox="0 0 20 18"><rect x="0.500" y="0.500" width="19" height="17" fill="#fff" stroke="#4860A8"/><rect x="0.500" y="0.500" width="19" height="3" fill="#5878C8"/><path d="M6 9c1-3 6-3 8-1l1-1.500v4h-4l1.500-1.200c-1.500-1-3.500-1-4.500.7z" fill="#38A030"/><path d="M14 12c-1 3-6 3-8 1l-1 1.500v-4h4l-1.500 1.200c1.500 1 3.500 1 4.500-.7z" fill="#38A030"/></svg>
<div class="a" style="left:1167px;top:127px;width:1px;height:22px;background:#C5C2B2"></div>
<svg class="a" style="left:1176px;top:129px" width="19" height="18" viewBox="0 0 19 18"><rect x="1" y="1" width="17" height="16" fill="#FDFDF8" stroke="#8C8878" stroke-width="2"/><path d="M5 5h6M7 8h8M5 11h5M7 14h6" stroke="#3858C0" stroke-width="1.400"/></svg>
<svg class="a" style="left:1203px;top:128px" width="19" height="19" viewBox="0 0 19 19"><rect x="0.500" y="0.500" width="18" height="18" fill="#E4EAF6" stroke="#5C6478"/><rect x="1" y="1" width="17" height="3.500" fill="#5878C8"/><path d="M3 8h3v2h-3zM3 13h3v2h-3z" fill="#8898C0"/><path d="M8 7.500h8v3h-8zM8 12.500h8v3h-8z" fill="#C8D4EC" stroke="#7888B0" stroke-width="0.800"/><path d="M1 18h17" stroke="#484C5C" stroke-width="1.500"/></svg>
<svg class="a" style="left:1231px;top:127px" width="21" height="21" viewBox="0 0 21 21"><rect x="7" y="0.500" width="7" height="5" rx="1" fill="#A8C0F0" stroke="#4868B8"/><rect x="1" y="8" width="6" height="5" rx="1" fill="#88A8E8" stroke="#4868B8"/><path d="M10 5.500L4 8M10.500 5.500l3 3" stroke="#4868B8"/><circle cx="13" cy="12" r="4" fill="#E8F0FC" stroke="#7080A0" stroke-width="1.400"/><path d="M16 15l4 4" stroke="#D89028" stroke-width="2.500"/></svg>
<div class="a" style="left:1082px;top:174px;width:1px;height:11px;background:repeating-linear-gradient(180deg,#A0A0A0 0,#A0A0A0 1px,transparent 1px,transparent 2px)"></div>
<div class="a" style="left:1087px;top:189px;width:11px;height:1px;background:repeating-linear-gradient(90deg,#A0A0A0 0,#A0A0A0 1px,transparent 1px,transparent 2px)"></div>
<div class="a" style="left:1103px;top:197px;width:1px;height:124px;background:repeating-linear-gradient(180deg,#A0A0A0 0,#A0A0A0 1px,transparent 1px,transparent 2px)"></div>
<div class="a" style="left:1104px;top:211px;width:14px;height:1px;background:repeating-linear-gradient(90deg,#A0A0A0 0,#A0A0A0 1px,transparent 1px,transparent 2px)"></div>
<div class="a" style="left:1108px;top:233px;width:10px;height:1px;background:repeating-linear-gradient(90deg,#A0A0A0 0,#A0A0A0 1px,transparent 1px,transparent 2px)"></div>
<div class="a" style="left:1104px;top:299px;width:14px;height:1px;background:repeating-linear-gradient(90deg,#A0A0A0 0,#A0A0A0 1px,transparent 1px,transparent 2px)"></div>
<div class="a" style="left:1104px;top:321px;width:14px;height:1px;background:repeating-linear-gradient(90deg,#A0A0A0 0,#A0A0A0 1px,transparent 1px,transparent 2px)"></div>
<div class="a" style="left:1124px;top:242px;width:1px;height:35px;background:repeating-linear-gradient(180deg,#A0A0A0 0,#A0A0A0 1px,transparent 1px,transparent 2px)"></div>
<div class="a" style="left:1125px;top:255px;width:14px;height:1px;background:repeating-linear-gradient(90deg,#A0A0A0 0,#A0A0A0 1px,transparent 1px,transparent 2px)"></div>
<div class="a" style="left:1125px;top:277px;width:14px;height:1px;background:repeating-linear-gradient(90deg,#A0A0A0 0,#A0A0A0 1px,transparent 1px,transparent 2px)"></div>
<svg class="a" style="left:1078px;top:185px" width="9" height="9" viewBox="0 0 9 9"><rect x="0.500" y="0.500" width="8" height="8" fill="#fff" stroke="#848484"/><path d="M2 4.500h5" stroke="#000"/></svg>
<svg class="a" style="left:1099px;top:229px" width="9" height="9" viewBox="0 0 9 9"><rect x="0.500" y="0.500" width="8" height="8" fill="#fff" stroke="#848484"/><path d="M2 4.500h5" stroke="#000"/></svg>
<svg class="a" style="left:1081px;top:159px" width="16" height="15" viewBox="0 0 16 15"><rect x="0.500" y="0.500" width="15" height="12" fill="#fff" stroke="#4C64B0"/><rect x="0.500" y="0.500" width="15" height="3" fill="#5878D0"/><circle cx="6" cy="11" r="3" fill="#E87820"/><circle cx="11" cy="11" r="3" fill="#48A038"/><path d="M5 12l6-5" stroke="#D82828" stroke-width="1.600"/></svg>
<span class="t se1" style="left:1101px;top:157.5px;font-size:16px;letter-spacing:-0.14px">Solution &#x27;HangMan&#x27; (1 project)</span>
<svg class="a" style="left:1102px;top:180px" width="16" height="15" viewBox="0 0 16 15"><rect x="4.500" y="0.500" width="11" height="9" fill="#DCE6FA" stroke="#4C64B0"/><rect x="4.500" y="0.500" width="11" height="2.500" fill="#5878D0"/><rect x="0.500" y="4.500" width="8" height="10" fill="#fff" stroke="#6C7CA8"/><path d="M2 8h5M2 10.500h5M2 12.500h4" stroke="#7890D0" stroke-width="0.900"/><path d="M8 4l1.500 4L11 4M12 4h1.500q1 1 0 2h-1.500zM12 6h1.700q1 1 0 2H12z" stroke="#183890" stroke-width="0.900" fill="none"/></svg>
<span class="t se2" style="left:1122px;top:179.5px;font-size:16px;font-weight:bold;">HangMan</span>
<svg class="a" style="left:1123px;top:204px" width="16" height="13" viewBox="0 0 16 13"><path d="M0.500 12.500v-12h5l1 2h9v10z" fill="#E4ECFA" stroke="#6878A8"/><rect x="2" y="4" width="12" height="7" fill="#7C98E0"/><path d="M3 6h4M3 8.500h3" stroke="#fff"/><path d="M9 10l4-5v5z" fill="#fff"/></svg>
<span class="t se3" style="left:1143px;top:201.5px;font-size:16px;">My Project</span>
<svg class="a" style="left:1123px;top:225px" width="17" height="14" viewBox="0 0 17 14"><path d="M0.500 13V1.500h5l1.500 2h6.500v3" fill="#E8C458" stroke="#8F6B16"/><path d="M0.500 13.500l3-7.500h13l-3.500 7.500z" fill="#FBE38E" stroke="#8F6B16"/></svg>
<span class="t se4" style="left:1143px;top:223.5px;font-size:16px;">Sounds</span>
<svg class="a" style="left:1144px;top:246px" width="16" height="16" viewBox="0 0 16 16"><path d="M4.500 0.500h8l3 3v11h-11z" fill="#F0F4FC" stroke="#6878A0"/><path d="M11 4h3M11 7h3M11 10h3" stroke="#7088C0" stroke-width="0.900"/><path d="M0.500 5.500h3l4-3.500v11l-4-3.500h-3z" fill="#F0C028" stroke="#806010" stroke-width="0.900"/><rect x="5.500" y="5" width="2" height="5" fill="#604808"/></svg>
<span class="t se5" style="left:1164px;top:245.5px;font-size:16px;letter-spacing:-0.23px">CorrectWord.wav</span>
<svg class="a" style="left:1144px;top:268px" width="16" height="16" viewBox="0 0 16 16"><path d="M4.500 0.500h8l3 3v11h-11z" fill="#F0F4FC" stroke="#6878A0"/><path d="M11 4h3M11 7h3M11 10h3" stroke="#7088C0" stroke-width="0.900"/><path d="M0.500 5.500h3l4-3.500v11l-4-3.500h-3z" fill="#F0C028" stroke="#806010" stroke-width="0.900"/><rect x="5.500" y="5" width="2" height="5" fill="#604808"/></svg>
<span class="t se6" style="left:1164px;top:267.5px;font-size:16px;letter-spacing:-0.12px">WrongWord.wav</span>
<svg class="a" style="left:1124px;top:291px" width="16" height="14" viewBox="0 0 16 14"><rect x="0.500" y="0.500" width="15" height="13" fill="#F4F6FC" stroke="#5C6C9C"/><rect x="0.500" y="0.500" width="15" height="3" fill="#6C8CDC"/><path d="M2.500 6.500h3M2.500 10.500h3" stroke="#48589C" stroke-width="1.400"/><path d="M7.500 5.500h5v2.500h-5zM7.500 9.500h5v2.500h-5z" fill="#fff" stroke="#7C8CB8" stroke-width="0.900"/></svg>
<span class="t se7" style="left:1143px;top:290.0px;font-size:16px;">Form1.vb</span>
<svg class="a" style="left:1124px;top:313px" width="16" height="14" viewBox="0 0 16 14"><rect x="0.500" y="0.500" width="15" height="13" fill="#F4F6FC" stroke="#5C6C9C"/><rect x="0.500" y="0.500" width="15" height="3" fill="#6C8CDC"/><path d="M2.500 6.500h3M2.500 10.500h3" stroke="#48589C" stroke-width="1.400"/><path d="M7.500 5.500h5v2.500h-5zM7.500 9.500h5v2.500h-5z" fill="#fff" stroke="#7C8CB8" stroke-width="0.900"/></svg>
<span class="t se8" style="left:1143px;top:312.0px;font-size:16px;">Form2.vb</span>
<div class="a" style="left:1070px;top:618px;width:530px;height:515px;background:#ECE9D8;border:1px solid #ACA899"></div>
<div class="phead" style="left:1070px;top:618px;width:530px;height:24px"></div>
<span class="t prh" style="left:1074px;top:623.0px;font-size:16px;color:#D3DCF6;">Properties</span>
<svg class="a" style="left:1530px;top:630px" width="13" height="7" viewBox="0 0 13 7"><path d="M0 0h13L6.500 6.500z" fill="#E4EEFF"/></svg>
<svg class="a" style="left:1553px;top:622px" width="12" height="16" viewBox="0 0 12 16"><path d="M3.500 1.500h5v8h-5zM7 1.500v8M1 9.500h10M6 9.500v6" stroke="#fff" stroke-width="1.200" fill="none"/></svg>
<svg class="a" style="left:1577px;top:623px" width="14" height="14" viewBox="0 0 14 14"><path d="M1.500 1.500L12.500 12.500M12.500 1.500L1.500 12.500" stroke="#fff" stroke-width="1.700"/></svg>
<div class="a" style="left:1071px;top:642px;width:528px;height:3px;background:#F4F2E8"></div>
<div class="a" style="left:1071px;top:645px;width:528px;height:28px;background:#fff"></div>
<div class="a" style="left:1584px;top:646px;width:14px;height:25px;background:linear-gradient(180deg,#F6F5EE,#DDDACA)"></div>
<svg class="a" style="left:1587px;top:657px" width="7" height="4" viewBox="0 0 7 4"><path d="M0 0h7L3.500 4z" fill="#000"/></svg>
<div class="a" style="left:1071px;top:643px;width:513px;height:30px;overflow:hidden"><span class="t" style="left:3px;top:8.500px;font-size:16px;"><b>GameToolStripMenuItem</b> System.Windows.Forms.ToolStripMenuItem</span></div>
<div class="a" style="left:1071px;top:673px;width:528px;height:29px;background:linear-gradient(180deg,#FBFAF7 0%,#F4F2EA 50%,#E6E3D3 100%)"></div>
<div class="a" style="left:1073px;top:677px;width:23px;height:22px;background:#C6D3F3;border:1px solid #4A66C0"></div>
<svg class="a" style="left:1076px;top:680px" width="17" height="16" viewBox="0 0 17 16"><rect x="0.500" y="0.500" width="6" height="6" fill="#fff" stroke="#4A5E98"/><path d="M2 3.500h3M3.500 2v3" stroke="#000" stroke-width="0.900"/><rect x="0.500" y="9.500" width="6" height="6" fill="#fff" stroke="#4A5E98"/><path d="M2 12.500h3M3.500 11v3" stroke="#000" stroke-width="0.900"/><path d="M9 2h7M9 5h7M9 11h7M9 14h7" stroke="#5870B8" stroke-width="1.300"/></svg>
<svg class="a" style="left:1099px;top:679px" width="18" height="18" viewBox="0 0 18 18"><path d="M1 8L4 1l3 7M2 6h4" stroke="#2848B0" stroke-width="1.300" fill="none"/><path d="M1.500 10.500h5l-5 6h5" stroke="#B02020" stroke-width="1.300" fill="none"/><path d="M13 1v14M10 12l3 4 3-4z" stroke="#000" stroke-width="1.300" fill="#000"/></svg>
<div class="a" style="left:1120px;top:677px;width:1px;height:22px;background:#C5C2B2"></div>
<div class="a" style="left:1125px;top:677px;width:23px;height:22px;background:#C6D3F3;border:1px solid #4A66C0"></div>
<svg class="a" style="left:1129px;top:681px" width="15" height="14" viewBox="0 0 15 14"><rect x="0.500" y="0.500" width="14" height="13" fill="#fff" stroke="#5C6C9C"/><path d="M2.500 3.500h2M2.500 6.500h2M2.500 9.500h2M6 3.500h6M6 6.500h6M6 9.500h6" stroke="#384880" stroke-width="1.200"/></svg>
<svg class="a" style="left:1151px;top:679px" width="14" height="18" viewBox="0 0 14 18"><path d="M8 0.500L2 9h4l-3 8 8-10H7l4-6.500z" fill="#F4C020" stroke="#A87808" stroke-width="0.800"/></svg>
<div class="a" style="left:1174px;top:677px;width:1px;height:22px;background:#C5C2B2"></div>
<svg class="a" style="left:1179px;top:680px" width="17" height="15" viewBox="0 0 17 15"><rect x="0.500" y="0.500" width="16" height="14" fill="#DAD7C8" stroke="#B4B1A0"/><rect x="3" y="5" width="10" height="6" fill="#E8E5D8" stroke="#B4B1A0"/></svg>
<div class="a" style="left:1071px;top:702px;width:528px;height:190px;background:#fff;border-top:1px solid #ACA899"></div>
<div class="a" style="left:1072px;top:703px;width:13px;height:188px;background:#ECE9D8"></div>
<div class="a" style="left:1085px;top:725px;width:490px;height:1px;background:#E6E4DA"></div>
<span class="t pn" style="left:1090px;top:707.5px;font-size:16px;letter-spacing:0.2px;-webkit-text-stroke:0.3px #000">Image</span>
<span class="t pv" style="left:1354px;top:706.5px;font-size:16px;letter-spacing:0px">(none)</span>
<div class="a" style="left:1085px;top:748px;width:490px;height:1px;background:#E6E4DA"></div>
<span class="t pn" style="left:1090px;top:730.5px;font-size:16px;letter-spacing:0.2px;-webkit-text-stroke:0.3px #000">ImageAlign</span>
<span class="t pv" style="left:1327px;top:729.5px;font-size:16px;letter-spacing:-0.33px">MiddleCenter</span>
<div class="a" style="left:1085px;top:771px;width:490px;height:1px;background:#E6E4DA"></div>
<span class="t pn" style="left:1090px;top:753.5px;font-size:16px;letter-spacing:0.2px;-webkit-text-stroke:0.3px #000">ImageScaling</span>
<span class="t pv" style="left:1327px;top:752.5px;font-size:16px;letter-spacing:0px">SizeToFit</span>
<div class="a" style="left:1085px;top:794px;width:490px;height:1px;background:#E6E4DA"></div>
<span class="t pn" style="left:1090px;top:776.5px;font-size:16px;letter-spacing:0.2px;-webkit-text-stroke:0.3px #000">ImageTransparentColor</span>
<div class="a" style="left:1085px;top:817px;width:490px;height:1px;background:#E6E4DA"></div>
<span class="t pn" style="left:1090px;top:799.5px;font-size:16px;letter-spacing:0.2px;-webkit-text-stroke:0.3px #000">RightToLeft</span>
<span class="t pv" style="left:1327px;top:798.5px;font-size:16px;letter-spacing:0px">No</span>
<div class="a" style="left:1085px;top:840px;width:490px;height:1px;background:#E6E4DA"></div>
<span class="t pn" style="left:1090px;top:822.5px;font-size:16px;letter-spacing:0.2px;-webkit-text-stroke:0.3px #000">RightToLeftAutoMirrorImage</span>
<span class="t pv" style="left:1327px;top:821.5px;font-size:16px;letter-spacing:-0.4px">False</span>
<div class="a" style="left:1085px;top:863px;width:490px;height:1px;background:#E6E4DA"></div>
<span class="t pn" style="left:1090px;top:845.5px;font-size:16px;letter-spacing:0.2px;-webkit-text-stroke:0.3px #000">ShortcutKeyDisplayString</span>
<div class="a" style="left:1085px;top:864px;width:239px;height:23px;background:#ECE9D8"></div>
<div class="a" style="left:1085px;top:886px;width:490px;height:1px;background:#E6E4DA"></div>
<span class="t pn" style="left:1090px;top:868.5px;font-size:16px;letter-spacing:0.2px;-webkit-text-stroke:0.3px #000">Text</span>
<span class="t pv" style="left:1327px;top:867.5px;font-size:16px;transform:scaleX(1.16);transform-origin:0 0;letter-spacing:0px">Меню</span>
<div class="a" style="left:1324px;top:703px;width:1px;height:188px;background:#E6E4DA"></div>
<div class="a" style="left:1326px;top:704px;width:20px;height:20px;background:#fff;border:1px solid #000"></div>
<div class="a" style="left:1326px;top:773px;width:20px;height:20px;background:#fff;border:1px solid #000"></div>
<div class="a" style="left:1575px;top:703px;width:23px;height:188px;background:#F6F5EF"></div>
<div class="btn3d" style="left:1575px;top:703px;width:23px;height:22px"></div>
<svg class="a" style="left:1581px;top:711px" width="11" height="6" viewBox="0 0 11 6"><path d="M0 6h11L5.500 0z" fill="#000"/></svg>
<div class="btn3d" style="left:1575px;top:868px;width:23px;height:22px"></div>
<svg class="a" style="left:1581px;top:876px" width="11" height="6" viewBox="0 0 11 6"><path d="M0 0h11L5.500 6z" fill="#000"/></svg>
<div class="btn3d" style="left:1575px;top:762px;width:23px;height:21px"></div>
<div class="a" style="left:1071px;top:892px;width:528px;height:4px;background:#ECE9D8;border-bottom:1px solid #ACA899"></div>
<span class="t dh" style="left:1077px;top:901.0px;font-size:16px;font-weight:bold;">Text</span>
<span class="t dt" style="left:1077px;top:923.5px;font-size:16px;letter-spacing:0.15px">The text to display on the item.</span>
<div class="a" style="left:27px;top:936px;width:1039px;height:169px;background:#fff;border:1px solid #ACA899"></div>
<div class="phead" style="left:27px;top:936px;width:1039px;height:25px"></div>
<span class="t oph" style="left:32px;top:941.0px;font-size:16px;color:#D3DCF6;letter-spacing:-0.3px">Output</span>
<svg class="a" style="left:997px;top:948px" width="13" height="7" viewBox="0 0 13 7"><path d="M0 0h13L6.500 6.500z" fill="#E4EEFF"/></svg>
<svg class="a" style="left:1019px;top:941px" width="12" height="16" viewBox="0 0 12 16"><path d="M3.500 1.500h5v8h-5zM7 1.500v8M1 9.500h10M6 9.500v6" stroke="#fff" stroke-width="1.200" fill="none"/></svg>
<svg class="a" style="left:1043px;top:942px" width="14" height="14" viewBox="0 0 14 14"><path d="M1.500 1.500L12.500 12.500M12.500 1.500L1.500 12.500" stroke="#fff" stroke-width="1.700"/></svg>
<div class="a" style="left:28px;top:961px;width:1037px;height:31px;background:linear-gradient(180deg,#FBFAF7 0%,#F4F2EA 50%,#E6E3D3 100%);border-bottom:1px solid #ACA899"></div>
<span class="t sof" style="left:33px;top:968.0px;font-size:16px;">Show output from:</span>
<div class="a" style="left:174px;top:966px;width:142px;height:21px;background:#fff"></div>
<div class="a" style="left:316px;top:966px;width:15px;height:21px;background:linear-gradient(180deg,#F6F5EE,#E2DFCE)"></div>
<svg class="a" style="left:319px;top:974px" width="9" height="5" viewBox="0 0 9 5"><path d="M0 0h9L4.5 5z" fill="#000"/></svg>
<div class="a" style="left:335px;top:965px;width:1px;height:22px;background:#C5C2B2"></div>
<div class="a" style="left:368px;top:965px;width:1px;height:22px;background:#C5C2B2"></div>
<div class="a" style="left:430px;top:965px;width:1px;height:22px;background:#C5C2B2"></div>
<div class="a" style="left:464px;top:965px;width:1px;height:22px;background:#C5C2B2"></div>
<svg class="a" style="left:342px;top:966px" width="18" height="20" viewBox="0 0 18 20"><path d="M4.500 1.500h9v11h-9z" fill="#D4D1C1" stroke="#B9B6A6"/><path d="M9 10v8M6 15l3 3.500 3-3.500z" fill="#B9B6A6" stroke="#B9B6A6"/></svg>
<svg class="a" style="left:375px;top:966px" width="22" height="20" viewBox="0 0 22 20"><path d="M8.500 1.500h9l3 3v10h-12z" fill="#D4D1C1" stroke="#B9B6A6"/><path d="M1 12l6-5v3h6v4H7v3z" fill="#B9B6A6"/></svg>
<svg class="a" style="left:403px;top:966px" width="22" height="20" viewBox="0 0 22 20"><path d="M2.500 1.500h9l3 3v10h-12z" fill="#D4D1C1" stroke="#B9B6A6"/><path d="M21 12l-6-5v3H9v4h6v3z" fill="#B9B6A6"/></svg>
<svg class="a" style="left:438px;top:968px" width="20" height="18" viewBox="0 0 20 18"><path d="M1 2h15M1 6h15M1 10h9" stroke="#B9B6A6" stroke-width="2"/><path d="M11 9l7 8M18 9l-7 8" stroke="#B9B6A6" stroke-width="2"/></svg>
<svg class="a" style="left:472px;top:968px" width="20" height="16" viewBox="0 0 20 16"><rect x="0.500" y="0.500" width="19" height="15" fill="#fff" stroke="#28408C"/><rect x="0.500" y="0.500" width="19" height="3" fill="#3C5CB8"/><path d="M15 6v4H7" stroke="#000" stroke-width="1.600" fill="none"/><path d="M9 7l-4 3 4 3z" fill="#000"/></svg>
<div class="a" style="left:27px;top:1105px;width:1039px;height:25px;background:#F4F2E8"></div>
<div class="a" style="left:28px;top:1105px;width:88px;height:22px;background:#ECE9D8;border:1px solid #C8C5B5;border-top:none"></div>
<div class="a" style="left:190px;top:1105px;width:123px;height:22px;background:#ECE9D8;border:1px solid #C8C5B5;border-top:none"></div>
<div class="a" style="left:116px;top:1104px;width:75px;height:27px;background:#FCFCFA;border:1px solid #9C9A8C;border-top:none"></div>
<svg class="a" style="left:30px;top:1108px" width="16" height="18" viewBox="0 0 16 18"><rect x="1.500" y="2.500" width="10" height="13" fill="#F4E8C0" stroke="#9C8C60"/><rect x="4" y="0.500" width="5" height="4" fill="#C8C0A0" stroke="#8C8464"/><circle cx="10.500" cy="12.500" r="4.500" fill="#E04830"/><path d="M8.500 10.500l4 4M12.500 10.500l-4 4" stroke="#fff" stroke-width="1.300"/></svg>
<span class="t b1" style="left:47px;top:1109.5px;font-size:16px;color:#85837A">Error List</span>
<svg class="a" style="left:120px;top:1111px" width="14" height="13" viewBox="0 0 14 13"><rect x="0.500" y="0.500" width="13" height="12" fill="#fff" stroke="#384C9C"/><rect x="0.500" y="0.500" width="13" height="3" fill="#5070C8"/><path d="M3 6h8M3 8.500h8M3 10.500h6" stroke="#5070C8" stroke-width="0.900"/></svg>
<span class="t b2" style="left:136.5px;top:1109.5px;font-size:16px;">Output</span>
<svg class="a" style="left:191px;top:1110px" width="16" height="16" viewBox="0 0 16 16"><rect x="0.500" y="0.500" width="14" height="10" fill="#E8EEFA" stroke="#485C9C"/><path d="M3 3.500h9M3 6h9" stroke="#6C84C8"/><path d="M6 9l8 6M14 9l-8 6" stroke="#303030" stroke-width="1.600"/><circle cx="6" cy="14" r="1.600" fill="#505050"/><circle cx="13" cy="14" r="1.600" fill="#505050"/></svg>
<span class="t b3" style="left:209px;top:1109.5px;font-size:16px;color:#85837A">Find Results 2</span>
<span class="t rdy" style="left:8px;top:1139.5px;font-size:16px;color:#222">Ready</span>
<svg class="a" style="left:1325px;top:1136px" width="16" height="15" viewBox="0 0 16 15"><path d="M5.500 0v5M1 3.500h6" stroke="#333" stroke-width="1"/><rect x="5.500" y="4.500" width="9" height="9" fill="none" stroke="#333" stroke-dasharray="1.500 1.500"/></svg>
<span class="t s1" style="left:1349px;top:1139.5px;font-size:16px;color:#222">11, 3</span>
<svg class="a" style="left:1450px;top:1135px" width="16" height="16" viewBox="0 0 16 16"><rect x="6.500" y="5.500" width="9" height="9" fill="none" stroke="#333" stroke-dasharray="1.500 1.500"/><path d="M6 2.500h9M6 0.500v4M15.500 0.500v4M12 0.500l3 2-3 2" stroke="#333" fill="none"/><path d="M2.500 6v8M0.500 14.500h4M0.500 11l2 3 2-3" stroke="#333" fill="none"/></svg>
<span class="t s2" style="left:1472.5px;top:1139.5px;font-size:16px;color:#222">67 x 25</span>
<div class="a" style="left:0px;top:1160px;width:1600px;height:1px;background:#fff"></div>
<div class="btn3d" style="left:3px;top:1163px;width:80px;height:34px;border-color:#fff #404040 #404040 #fff"></div>
<svg class="a" style="left:7px;top:1169px" width="21" height="20" viewBox="0 0 21 20"><path d="M2 4c3-2 5-2 8 0l-2 6c-3-2-5-2-8 0z" fill="#E8502C"/><path d="M11 4c3 2 5 2 8 0l-2 6c-3 2-5 2-8 0z" fill="#58B038"/><path d="M0 11c3-2 5-2 8 0l-2 6c-3-2-5-2-8 0z" fill="#3C78E0"/><path d="M9 11c3 2 5 2 8 0l-2 6c-3 2-5 2-8 0z" fill="#F8C020"/></svg>
<span class="t stt" style="left:27px;top:1167.5px;font-size:23px;font-weight:bold;letter-spacing:-1.2px">Start</span>
<div class="btn3d" style="left:89px;top:1163px;width:158px;height:34px;border-color:#fff #404040 #404040 #fff"></div>
<svg class="a" style="left:93px;top:1170px" width="20" height="20" viewBox="0 0 20 20"><rect x="6.500" y="0.500" width="13" height="17" fill="#fff" stroke="#6880B8"/><path d="M9 4h8M9 7h8M9 10h8M9 13h8" stroke="#90A8D8"/><rect x="0.500" y="3.500" width="11" height="11" fill="#2C58B8" stroke="#183880"/><path d="M2.500 6l1.500 6 2-5 2 5 1.500-6" stroke="#fff" stroke-width="1.300" fill="none"/></svg>
<span class="t g1" style="left:117px;top:1168.9px;font-size:22px;letter-spacing:1.03px">Games o...</span>
<div class="a" style="left:252px;top:1163px;width:159px;height:34px;background:#F8F7F1;border:1px solid;border-color:#404040 #fff #fff #404040;box-shadow:inset 1px 1px 0 #ACA899"></div>
<svg class="a" style="left:257px;top:1173px" width="21" height="15" viewBox="0 0 21 15"><ellipse cx="6" cy="7.500" rx="5.500" ry="5.500" fill="#E8731C"/><ellipse cx="15" cy="7.500" rx="6" ry="5.500" fill="#3A9B35"/><ellipse cx="15.500" cy="4.500" rx="4" ry="2.500" fill="#4E7FD8"/><ellipse cx="6" cy="10.500" rx="3.500" ry="2.500" fill="#F4C22B"/><path d="M3 11.500C8 0,13 15,19 3.500" stroke="#fff" stroke-width="1.800" fill="none"/><circle cx="10.500" cy="7.500" r="2" fill="#C7252B"/></svg>
<span class="t g2" style="left:283px;top:1169.9px;font-size:22px;font-weight:bold;letter-spacing:-0.5px">HangMan...</span>
<div class="a" style="left:1393px;top:1170px;width:20px;height:20px;background:#2C64C8"></div>
<span class="t en" style="left:1394px;top:1173.5px;font-size:16px;color:#fff;letter-spacing:-0.5px">EN</span>
<div class="a" style="left:1417px;top:1166px;width:1px;height:28px;background:#ACA899;box-shadow:1px 0 0 #fff"></div>
<div class="a" style="left:1422px;top:1164px;width:175px;height:33px;border:1px solid;border-color:#ACA899 #fff #fff #ACA899"></div>
<span class="t lq" style="left:1427px;top:1169.1px;font-size:20px;font-weight:bold">«</span>
<svg class="a" style="left:1444px;top:1170px" width="20" height="20" viewBox="0 0 20 20"><rect x="8" y="1" width="11" height="8" fill="#C8CCD4" stroke="#404040"/><path d="M8 1l3-1h8v7l-1 2" fill="#E8E8E8" stroke="#404040" stroke-width="0.800"/><rect x="1" y="8" width="11" height="8" fill="#18B8B0" stroke="#202020" stroke-width="1.300"/><rect x="3" y="17" width="8" height="2" fill="#404040"/><path d="M12 16l6-5v3h2v4h-2v3z" fill="#1838C8" transform="translate(-2,-3) scale(0.900)"/></svg>
<svg class="a" style="left:1467px;top:1170px" width="20" height="20" viewBox="0 0 20 20"><rect x="7" y="0.500" width="11" height="9" fill="#4860A8" stroke="#283870"/><rect x="1" y="5.500" width="11" height="9" fill="#6888D0" stroke="#283870"/><rect x="2.500" y="7" width="8" height="6" fill="#1C2C68"/><rect x="2" y="16" width="9" height="2.500" fill="#A8B8E0"/><path d="M10 11l8 8M18 11l-8 8" stroke="#E81818" stroke-width="2.600"/></svg>
<svg class="a" style="left:1488px;top:1170px" width="20" height="20" viewBox="0 0 20 20"><rect x="7" y="0.500" width="11" height="9" fill="#4860A8" stroke="#283870"/><rect x="1" y="5.500" width="11" height="9" fill="#6888D0" stroke="#283870"/><rect x="2.500" y="7" width="8" height="6" fill="#1C2C68"/><rect x="2" y="16" width="9" height="2.500" fill="#A8B8E0"/><path d="M10 11l8 8M18 11l-8 8" stroke="#E81818" stroke-width="2.600"/></svg>
<span class="t clk" style="left:1528px;top:1169.4px;font-size:22px;letter-spacing:0.3px">0:19</span>
</body></html>
